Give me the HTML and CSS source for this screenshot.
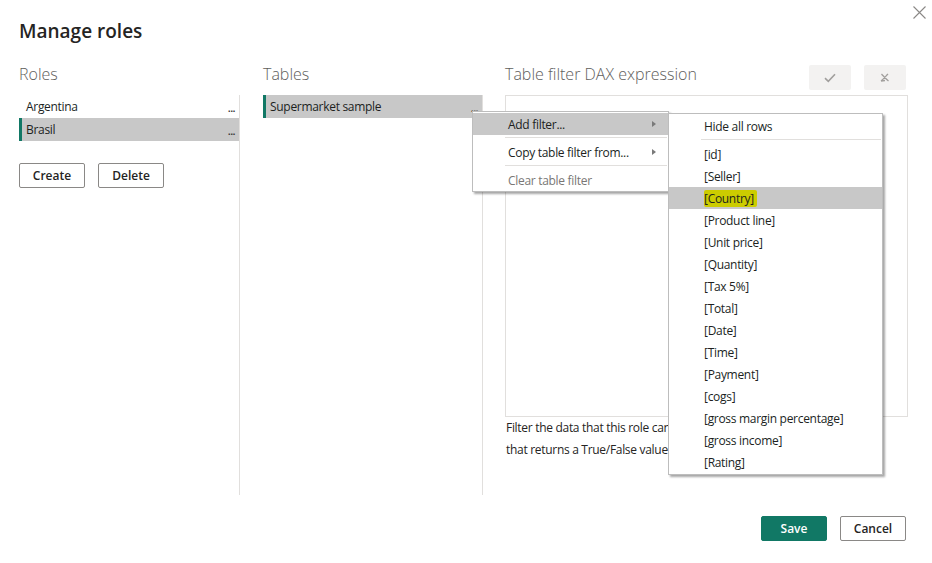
FILE: index.html
```html
<!DOCTYPE html>
<html lang="en">
<head>
<meta charset="utf-8">
<title>Manage roles</title>
<link rel="stylesheet" href="styles.css">
</head>
<body>
<div class="dialog">
  <button class="close" aria-label="Close">
    <svg width="13" height="13" viewBox="0 0 13 13"><path d="M0.5 0.5 L12.5 12.5 M12.5 0.5 L0.5 12.5" stroke="#8a8886" stroke-width="1.1" fill="none"/></svg>
  </button>
  <h1 class="title">Manage roles</h1>

  <div class="columns">
    <section class="col">
      <div class="col-head"><h2 class="col-title">Roles</h2></div>
      <div class="col-body bordered">
        <ul class="list">
          <li class="item"><span class="label">Argentina</span><span class="more">...</span></li>
          <li class="item selected"><span class="label">Brasil</span><span class="more">...</span></li>
        </ul>
        <div class="actions">
          <button class="btn">Create</button>
          <button class="btn">Delete</button>
        </div>
      </div>
    </section>

    <section class="col">
      <div class="col-head"><h2 class="col-title">Tables</h2></div>
      <div class="col-body bordered">
        <ul class="list">
          <li class="item selected"><span class="label">Supermarket sample</span><span class="more">...</span></li>
        </ul>
      </div>
    </section>

    <section class="col">
      <div class="col-head">
        <h2 class="col-title">Table filter DAX expression</h2>
        <div class="dax-tools">
          <button class="tool" aria-label="Apply">
            <svg width="12" height="10" viewBox="0 0 12 10"><path d="M1 5.2 L4.3 8.3 L11 1.2" stroke="#a19f9d" stroke-width="1.6" fill="none"/></svg>
          </button>
          <button class="tool" aria-label="Discard">
            <svg width="10" height="9" viewBox="0 0 10 9"><path d="M1.5 1 C3 2.5 6 6 8.5 8 M8 1 C6 3 3.5 6 1 8 M1 8 L5 7.5" stroke="#a19f9d" stroke-width="1.3" fill="none"/></svg>
          </button>
        </div>
      </div>
      <div class="col-body">
        <div class="dax-box"></div>
        <p class="hint">Filter the data that this role can see by entering a DAX filter expression that returns a True/False value.</p>
      </div>
    </section>
  </div>

  <div class="footer">
    <button class="btn primary">Save</button>
    <button class="btn">Cancel</button>
  </div>

  <div class="menu menu-main">
    <div class="menu-item active"><span>Add filter...</span><span class="arrow"></span></div>
    <div class="menu-sep"></div>
    <div class="menu-item"><span>Copy table filter from...</span><span class="arrow"></span></div>
    <div class="menu-sep"></div>
    <div class="menu-item disabled"><span>Clear table filter</span></div>
  </div>

  <div class="menu menu-sub">
    <div class="menu-item">Hide all rows</div>
    <div class="menu-sep"></div>
    <div class="menu-item">[id]</div>
    <div class="menu-item">[Seller]</div>
    <div class="menu-item active"><span class="marker">[Country]</span></div>
    <div class="menu-item">[Product line]</div>
    <div class="menu-item">[Unit price]</div>
    <div class="menu-item">[Quantity]</div>
    <div class="menu-item">[Tax 5%]</div>
    <div class="menu-item">[Total]</div>
    <div class="menu-item">[Date]</div>
    <div class="menu-item">[Time]</div>
    <div class="menu-item">[Payment]</div>
    <div class="menu-item">[cogs]</div>
    <div class="menu-item">[gross margin percentage]</div>
    <div class="menu-item">[gross income]</div>
    <div class="menu-item">[Rating]</div>
  </div>
</div>
</body>
</html>
```

FILE: styles.css
```css
* { box-sizing: border-box; }

html, body {
  margin: 0;
  padding: 0;
  background: #ffffff;
}

body {
  font-family: "Open Sans", "Noto Sans", "Liberation Sans", sans-serif;
  font-size: 12px;
  color: #252423;
}

.dialog {
  position: relative;
  width: 932px;
  height: 563px;
  padding: 16px 26px 0 19px;
}

.close {
  position: absolute;
  top: 6px;
  right: 6px;
  width: 13px;
  height: 13px;
  padding: 0;
  border: 0;
  background: none;
  display: flex;
}

.title {
  margin: 0;
  height: 34px;
  font-size: 19px;
  line-height: 31px;
  font-weight: 600;
  color: #252423;
}

.columns {
  display: grid;
  grid-template-columns: 221px 220px 402px;
  column-gap: 23px;
}

.columns > .col:last-child {
  margin-left: -1px;
}

.col-head {
  height: 45px;
  display: flex;
  align-items: flex-start;
  justify-content: space-between;
  padding-top: 13px;
}

.col-title {
  margin: 0;
  font-size: 16px;
  line-height: 22px;
  font-weight: 300;
  color: #605e5c;
}

.col-body {
  height: 400px;
}

.bordered {
  border-right: 1px solid #e1dfdd;
}

.list {
  list-style: none;
  margin: 0;
  padding: 0;
}

.item {
  display: flex;
  justify-content: space-between;
  align-items: center;
  height: 23px;
  padding: 0 4px 0 7px;
  border-left: 3px solid transparent;
  font-size: 12px;
  letter-spacing: -0.3px;
  color: #201f1e;
}

.item .label { margin-left: -3px; }

.item.selected {
  background: #c8c8c8;
  border-left-color: #117865;
}

.item .more {
  font-size: 11px;
  line-height: 1;
  align-self: flex-end;
  padding-bottom: 5px;
  letter-spacing: -0.6px;
  font-weight: 600;
  color: #323130;
}

.actions {
  display: flex;
  gap: 13px;
  margin-top: 22px;
}

.btn {
  font-family: inherit;
  height: 25px;
  min-width: 66px;
  padding: 0 10px;
  font-size: 12px;
  font-weight: 600;
  color: #252423;
  background: #ffffff;
  border: 1px solid #8a8886;
  border-radius: 2px;
}

.btn.primary {
  background: #117865;
  border-color: #117865;
  color: #ffffff;
}

.dax-tools {
  display: flex;
  gap: 13px;
  margin-top: 2px;
  margin-right: 2px;
}

.tool {
  width: 42px;
  height: 25px;
  padding: 0;
  border: 0;
  border-radius: 2px;
  background: #f3f2f1;
  display: flex;
  align-items: center;
  justify-content: center;
}

.dax-box {
  height: 322px;
  border: 1px solid #e1dfdd;
}

.hint {
  margin: 0;
  max-width: 380px;
  font-size: 12px;
  line-height: 22px;
  letter-spacing: -0.3px;
  padding-left: 1px;
  color: #252423;
}

.footer {
  display: flex;
  justify-content: flex-end;
  gap: 13px;
  margin-top: 21px;
}

.menu {
  position: absolute;
  background: #ffffff;
  border: 1px solid #bdbdbd;
  box-shadow: 2px 2px 2px rgba(0, 0, 0, 0.35);
}

.menu-main {
  left: 472px;
  top: 111px;
  width: 197px;
  padding: 1px 0 0 0;
}

.menu-sub {
  left: 668px;
  top: 113px;
  width: 215px;
  padding: 1px 0 1px 0;
}

.menu-item {
  display: flex;
  align-items: center;
  justify-content: space-between;
  height: 22px;
  padding: 0 12px 0 35px;
  font-size: 12px;
  letter-spacing: -0.3px;
  color: #201f1e;
  white-space: nowrap;
}

.menu-item.active { background: #c8c8c8; }
.menu-item.disabled { color: #797775; }

.arrow {
  width: 0;
  height: 0;
  border-top: 3.5px solid transparent;
  border-bottom: 3.5px solid transparent;
  border-left: 4px solid #7a7a7a;
}

.menu-sep {
  height: 6px;
  margin: 0 1px 0 32px;
  position: relative;
}

.menu-sep::after {
  content: "";
  position: absolute;
  left: 0;
  right: 0;
  top: 2px;
  border-top: 1px solid #e1dfdd;
}

.marker {
  background: #cccc00;
  border-radius: 2px;
  padding: 0 3px 0 0;
}
```
